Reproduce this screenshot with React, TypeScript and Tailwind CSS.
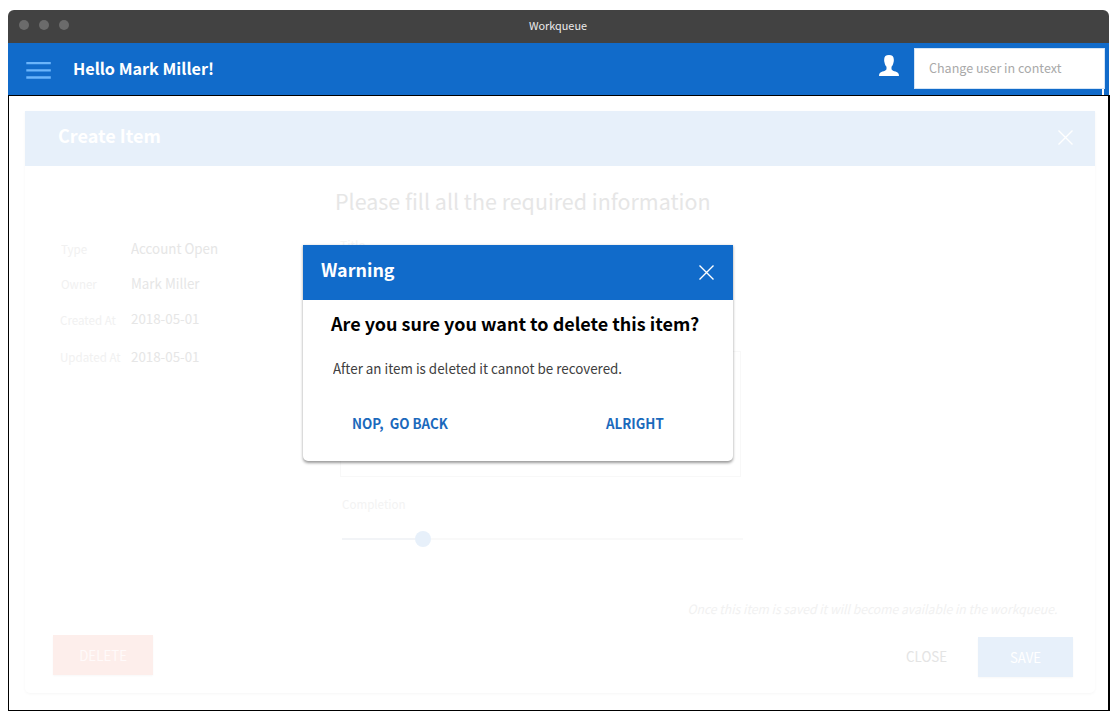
import React from "react";

function CloseIcon({ className }: { className: string }) {
  return (
    <svg className={className} width="15" height="15" viewBox="0 0 15 15" fill="none" stroke="currentColor" strokeWidth="1.4">
      <path d="M0.5 0.5 14.5 14.5M14.5 0.5 0.5 14.5" />
    </svg>
  );
}

function UserIcon() {
  return (
    <svg className="mt-3" width="20" height="21" viewBox="0 0 20 21" fill="white">
      <path d="M10 0C6.8 0 5.2 1.5 5.2 4.2C5 5.2 5.2 6.5 5.5 7.4C5.8 9.2 6.6 10.6 7.5 11.8V14.2C7 15.4 5.2 16 3.4 16.6C1.2 17.4 0 18.6 0 21H20C20 18.6 18.8 17.4 16.6 16.6C14.8 16 13 15.4 12.5 14.2V11.8C13.4 10.6 14.2 9.2 14.5 7.4C14.8 6.5 15 5.2 14.8 4.2C14.8 1.5 13.2 0 10 0Z" />
    </svg>
  );
}

function MenuIcon() {
  return (
    <svg className="ml-[18px] mt-[19px]" width="25" height="18" viewBox="0 0 25 18" stroke="#6bb5fb" strokeWidth="2.3">
      <path d="M0.3 1.2H24.8M0.3 8.3H24.8M0.3 15.5H24.8" />
    </svg>
  );
}

const details = [
  { label: "Type", value: "Account Open", row: "h-[35px]", labelBox: "pl-[36px] pt-px" },
  { label: "Owner", value: "Mark Miller", row: "h-[35px]", labelBox: "pl-[36px] pt-px" },
  { label: "Created At", value: "2018-05-01", row: "h-[38px]", labelBox: "pl-[35px] pt-[2px]" },
  { label: "Updated At", value: "2018-05-01", row: "h-[38px]", labelBox: "pl-[35px] pt-px" },
];

function Details() {
  return (
    <div className="w-[310px] shrink-0 pt-[72px]">
      {details.map((d) => (
        <div key={d.label} className={`flex ${d.row}`}>
          <div className={`w-[106px] ${d.labelBox}`}>
            <div className="origin-left scale-x-[0.965] whitespace-nowrap text-[12px] leading-5 text-[#f1f1f1]">{d.label}</div>
          </div>
          <div className="origin-left scale-x-[0.953] whitespace-nowrap text-[14px] leading-5 text-[#e6e6e6]">{d.value}</div>
        </div>
      ))}
    </div>
  );
}

function ItemForm() {
  return (
    <div className="pt-[19px]">
      <h2 className="text-[21.45px] leading-8 text-[#e6e6e6]">Please fill all the required information</h2>
      <div className="ml-[5px] mt-[18px] h-[116px] text-[12px] leading-5 text-[#f4f4f4]">Title</div>
      <div className="ml-[5px] h-[126px] w-[401px] border border-[#f8f8f8]" />
      <div className="ml-[7px] mt-[17px] origin-left scale-x-[0.965] text-[12px] leading-5 text-[#f3f3f3]">Completion</div>
      <div className="ml-[7px] mt-[17px] flex w-[401px] items-center">
        <div className="h-[2px] w-[73px] bg-[#f2f4f7]" />
        <div className="size-4 rounded-full bg-[#e7f0fa]" />
        <div className="h-[2px] flex-1 bg-[#f9f9f9]" />
      </div>
    </div>
  );
}

function WarningDialog() {
  return (
    <div className="absolute left-[303px] top-[245px] h-[216px] w-[430px] rounded-b-[5px] bg-white shadow-[0_1.5px_3px_rgba(0,0,0,0.4)]">
      <div className="flex h-[55px] justify-between bg-[#116bca] pl-[18px] pr-[19px] text-white">
        <h2 className="mt-[11.5px] text-[17.9px] font-bold leading-6">Warning</h2>
        <CloseIcon className="mt-5" />
      </div>
      <p className="ml-7 mt-[11px] whitespace-nowrap text-[17.98px] font-bold leading-6 text-black">Are you sure you want to delete this item?</p>
      <p className="ml-[30px] mt-[23px] origin-left scale-x-[0.957] whitespace-nowrap text-[14px] leading-5 text-[#404040]">After an item is deleted it cannot be recovered.</p>
      <div className="mt-[35px] flex text-[14px] font-bold leading-5 text-[#1b69bc]">
        <button className="ml-[49px] w-[254px] origin-left scale-x-[0.953] whitespace-nowrap text-left">NOP,&nbsp; GO BACK</button>
        <button className="origin-left scale-x-[0.953]">ALRIGHT</button>
      </div>
    </div>
  );
}

export default function App() {
  return (
    <div className="relative h-[714px] w-[1114px] overflow-hidden bg-white pl-2 pt-[10px] font-['Noto_Sans_CJK_SC',sans-serif]">
      <div className="flex h-[33px] w-[1101px] rounded-t-md bg-[#424242]">
        <div className="flex w-[521px] gap-[10px] pl-[11.4px] pt-[10px]">
          <i className="size-[10px] rounded-full bg-[#6b6b6b]" />
          <i className="size-[10px] rounded-full bg-[#6b6b6b]" />
          <i className="size-[10px] rounded-full bg-[#6b6b6b]" />
        </div>
        <span className="mt-[7px] text-[10.85px] leading-4 text-[#ececec]">Workqueue</span>
      </div>
      <header className="flex h-[52px] w-[1101px] items-start bg-[#116bca]">
        <MenuIcon />
        <h1 className="ml-[22px] mt-[13px] w-[806px] text-[16.2px] font-bold leading-6 text-white">Hello Mark Miller!</h1>
        <UserIcon />
        <div className="ml-[15px] w-[191px]">
          <div className="mt-[5px] h-[41px] border border-[#d5e5f6] bg-white pl-[14px] pt-[9px] text-[12.56px] leading-5 text-[#a9a9a9]">Change user in context</div>
          <div className="ml-auto mr-px h-[6px] w-[2px] bg-white" />
        </div>
      </header>
      <main className="h-[616px] w-[1102px] border border-r-2 border-black pl-4 pt-[15px]">
        <section className="h-[582px] w-[1070px] rounded-b-[5px] shadow-[0_1px_3px_rgba(0,0,0,0.04)]">
          <div className="flex h-[55px] justify-between bg-[#e7f0fa] pl-[33px] pr-[22px] text-white">
            <h2 className="mt-3 text-[18.05px] font-bold leading-6">Create Item</h2>
            <CloseIcon className="mt-[19px]" />
          </div>
          <div className="flex h-[433px]">
            <Details />
            <ItemForm />
          </div>
          <div className="flex h-[20px] justify-end pr-[38px]">
            <em className="origin-right scale-x-[0.96] whitespace-nowrap text-[12.7px] leading-5 text-[#f1f1f1]">Once this item is saved it will become available in the workqueue.</em>
          </div>
          <div className="flex items-start pl-7 pr-[22px] pt-[16px] text-[14px]">
            <button className="h-10 w-[100px] bg-[#fdeeeb] leading-[40px] text-[#fffafa] shadow-[0_1px_2px_rgba(0,0,0,0.03)]">
              <span className="inline-block scale-x-[0.953]">DELETE</span>
            </button>
            <button className="ml-auto mr-[31px] h-10 w-[41px] leading-[42px] text-[#e4e4e4]">
              <span className="-ml-px inline-block scale-x-[0.953]">CLOSE</span>
            </button>
            <button className="mt-[2px] h-10 w-[95px] bg-[#e7f0fa] leading-[40px] text-white shadow-[0_1px_2px_rgba(0,0,0,0.03)]">
              <span className="inline-block scale-x-[0.943]">SAVE</span>
            </button>
          </div>
        </section>
      </main>
      <WarningDialog />
    </div>
  );
}
